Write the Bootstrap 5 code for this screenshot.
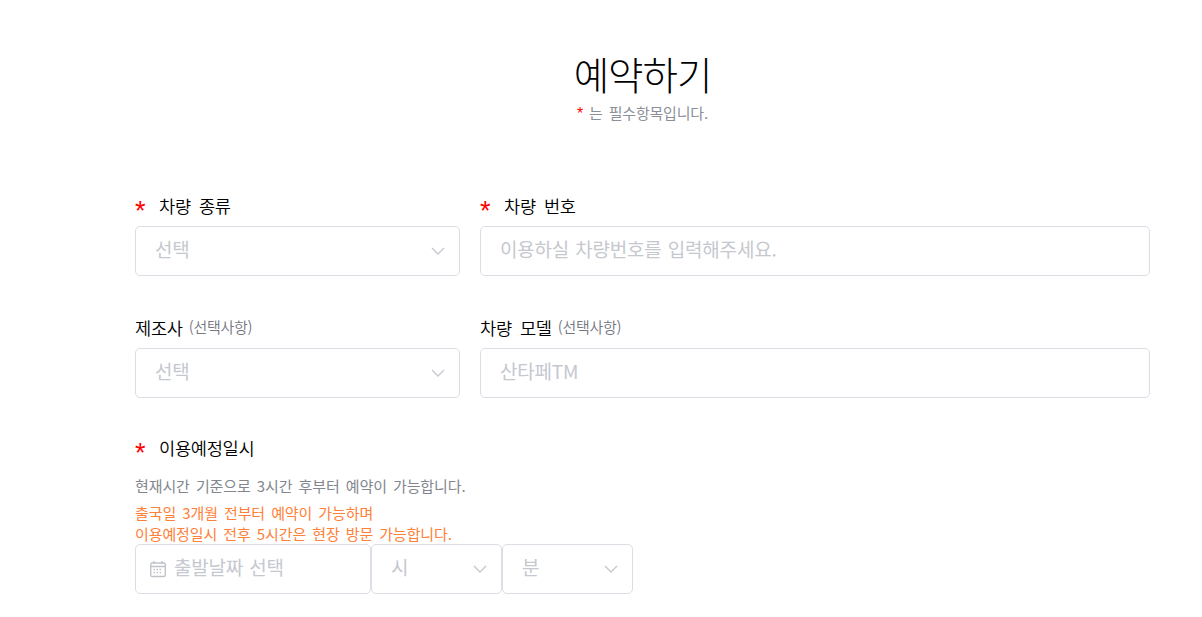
<!DOCTYPE html>
<html lang="ko">
<head>
    <meta charset="UTF-8">
    <title>예약하기</title>
    <link rel="stylesheet" href="https://cdn.jsdelivr.net/npm/bootstrap@5.3.3/dist/css/bootstrap.min.css">
    <style>
        html, body { height: 617px; overflow: hidden; }
        body { font-family: "Noto Sans CJK KR", sans-serif; background: #fff; color: #000; }
        .rsv-wrap { width: 1015px; margin-left: 135px; }
        .rsv-head { padding-top: 46px; height: 194px; }
        .rsv-title { font-size: 38.5px; font-weight: 300; line-height: 54px; margin: 0; letter-spacing: -1px; }
        .rsv-sub { font-size: 15px; line-height: 20px; margin-top: 3px; color: #8b8f99; word-spacing: 2px; letter-spacing: -.2px; }
        .rsv-sub .rsv-star { font-size: 16px; line-height: 16px; }
        .rsv-star { color: #f00; font-family: "Liberation Sans", sans-serif; }
        .rsv-row { gap: 20px; height: 122px; }
        .rsv-side { width: 325px; flex: none; }
        .rsv-main { flex: 1; }
        .rsv-label { font-size: 17.6px; font-weight: 350; line-height: 24px; height: 24px; margin-bottom: 8px; word-spacing: 3.5px; letter-spacing: -.3px; display: flex; align-items: center; }
        .rsv-label .rsv-star { width: 24px; flex: none; font-size: 27px; line-height: 24px; padding-top: 9px; }
        .rsv-opt { font-size: 15px; color: #74777f; margin-left: 6px; letter-spacing: -.25px; padding-bottom: 2px; }
        .rsv-field { height: 50px; border: 1px solid #dcdee6; border-radius: 5px; padding: 0 14px 0 19px; font-size: 19px; color: #c5c8cf; background: #fff; letter-spacing: -.2px; word-spacing: 1px; }
        .rsv-field span { line-height: 1; margin-bottom: 6px; }
        .rsv-note { font-size: 15px; line-height: 21px; letter-spacing: -.1px; word-spacing: 2px; }
        .rsv-when { margin-top: -2px; }
        .rsv-gray { color: #83868e; margin-top: 15px; margin-bottom: 6px; }
        .rsv-orange { color: #ff8038; }
        .rsv-date { width: 236px; padding-left: 13px; }
        .rsv-time { width: 131px; }
        .rsv-date svg { margin-right: 7px; }
    </style>
</head>
<body>
    <div class="rsv-wrap">
        <div class="rsv-head text-center">
            <h1 class="rsv-title">예약하기</h1>
            <div class="rsv-sub"><span class="rsv-star">*</span> 는 필수항목입니다.</div>
        </div>

        <div class="rsv-row d-flex">
            <div class="rsv-side">
                <div class="rsv-label"><span class="rsv-star">*</span>차량 종류</div>
                <div class="rsv-field d-flex align-items-center justify-content-between">
                    <span>선택</span>
                    <svg width="14" height="9" viewBox="0 0 14 9" fill="none" stroke="#c5c8cf" stroke-width="1.4"><path d="M1 1l6 6 6-6"/></svg>
                </div>
            </div>
            <div class="rsv-main">
                <div class="rsv-label"><span class="rsv-star">*</span>차량 번호</div>
                <div class="rsv-field d-flex align-items-center"><span>이용하실 차량번호를 입력해주세요.</span></div>
            </div>
        </div>

        <div class="rsv-row d-flex">
            <div class="rsv-side">
                <div class="rsv-label">제조사<span class="rsv-opt">(선택사항)</span></div>
                <div class="rsv-field d-flex align-items-center justify-content-between">
                    <span>선택</span>
                    <svg width="14" height="9" viewBox="0 0 14 9" fill="none" stroke="#c5c8cf" stroke-width="1.4"><path d="M1 1l6 6 6-6"/></svg>
                </div>
            </div>
            <div class="rsv-main">
                <div class="rsv-label">차량 모델<span class="rsv-opt">(선택사항)</span></div>
                <div class="rsv-field d-flex align-items-center"><span>산타페TM</span></div>
            </div>
        </div>

        <div class="rsv-label rsv-when"><span class="rsv-star">*</span>이용예정일시</div>
        <div class="rsv-note rsv-gray">현재시간 기준으로 3시간 후부터 예약이 가능합니다.</div>
        <div class="rsv-note rsv-orange">출국일 3개월 전부터 예약이 가능하며<br>이용예정일시 전후 5시간은 현장 방문 가능합니다.</div>
        <div class="d-flex">
            <div class="rsv-field rsv-date d-flex align-items-center">
                <svg width="18" height="18" viewBox="0 0 18 18" fill="none" stroke="#c0c3cb" stroke-width="1.4"><rect x="1.700" y="3" width="14.600" height="13.500" rx="1.500"/><path d="M1.700 6.500h14.600M5 1v3M13 1v3"/><path d="M4.500 9.500h9M4.500 12.500h9" stroke-dasharray="1.500 1.500"/></svg>
                <span>출발날짜 선택</span>
            </div>
            <div class="rsv-field rsv-time d-flex align-items-center justify-content-between">
                <span>시</span>
                <svg width="14" height="9" viewBox="0 0 14 9" fill="none" stroke="#c5c8cf" stroke-width="1.4"><path d="M1 1l6 6 6-6"/></svg>
            </div>
            <div class="rsv-field rsv-time d-flex align-items-center justify-content-between">
                <span>분</span>
                <svg width="14" height="9" viewBox="0 0 14 9" fill="none" stroke="#c5c8cf" stroke-width="1.4"><path d="M1 1l6 6 6-6"/></svg>
            </div>
        </div>
    </div>
    <script src="https://cdn.jsdelivr.net/npm/bootstrap@5.3.3/dist/js/bootstrap.bundle.min.js"></script>
</body>
</html>
